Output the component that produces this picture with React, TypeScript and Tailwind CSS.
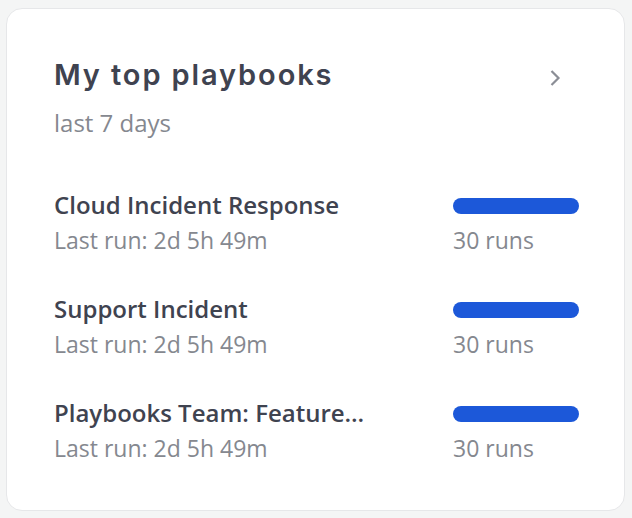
const playbooks = [
  { title: "Cloud Incident Response", lastRun: "2d 5h 49m", runs: 30 },
  { title: "Support Incident", lastRun: "2d 5h 49m", runs: 30 },
  { title: "Playbooks Team: Feature Release Checklist", lastRun: "2d 5h 49m", runs: 30 },
]

export default function App() {
  return (
    <div className="min-h-[518px] w-[632px] bg-[#f4f5f5] pt-2 pl-[6px]">
      <div
        className="flex h-[503px] w-[619px] flex-col rounded-[16px] border border-[#e6e7e9] bg-white pl-[47px] pr-[45px]"
        style={{ fontFamily: '"Open Sans", sans-serif' }}
      >
        <div className="mt-[48px] flex items-center justify-between">
          <h2
            className="text-[29px] font-semibold leading-[36px] tracking-[0.065em] text-[#3f4350]"
            style={{ fontFamily: 'Inter, "Open Sans", sans-serif' }}
          >
            My top playbooks
          </h2>
          <svg width="12" height="18" viewBox="0 0 12 18" className="mt-[5px] mr-[18px]">
            <path d="M2.5 2 L9.5 9 L2.5 16" fill="none" stroke="#8b8e96" strokeWidth="2.2" />
          </svg>
        </div>
        <p className="mt-[14px] text-[24px] leading-[32px] text-[#85888f]">last 7 days</p>

        <div className="mt-[50px] flex flex-col gap-[38px]">
          {playbooks.map((p) => (
            <div key={p.title} className="flex justify-between">
              <div className="flex w-[315px] flex-col">
                <div className="truncate text-[24px] font-semibold leading-[32px] text-[#3f4350]">
                  {p.title}
                </div>
                <div className="mt-[4px] text-[23px] leading-[30px] text-[#85888f]">
                  Last run: {p.lastRun}
                </div>
              </div>
              <div className="flex w-[126px] flex-col">
                <div className="mt-[9px] h-[16px] w-full rounded-full bg-[#1c58d9]" />
                <div className="mt-[11px] text-[23px] leading-[30px] text-[#85888f]">{p.runs} runs</div>
              </div>
            </div>
          ))}
        </div>
      </div>
    </div>
  )
}
